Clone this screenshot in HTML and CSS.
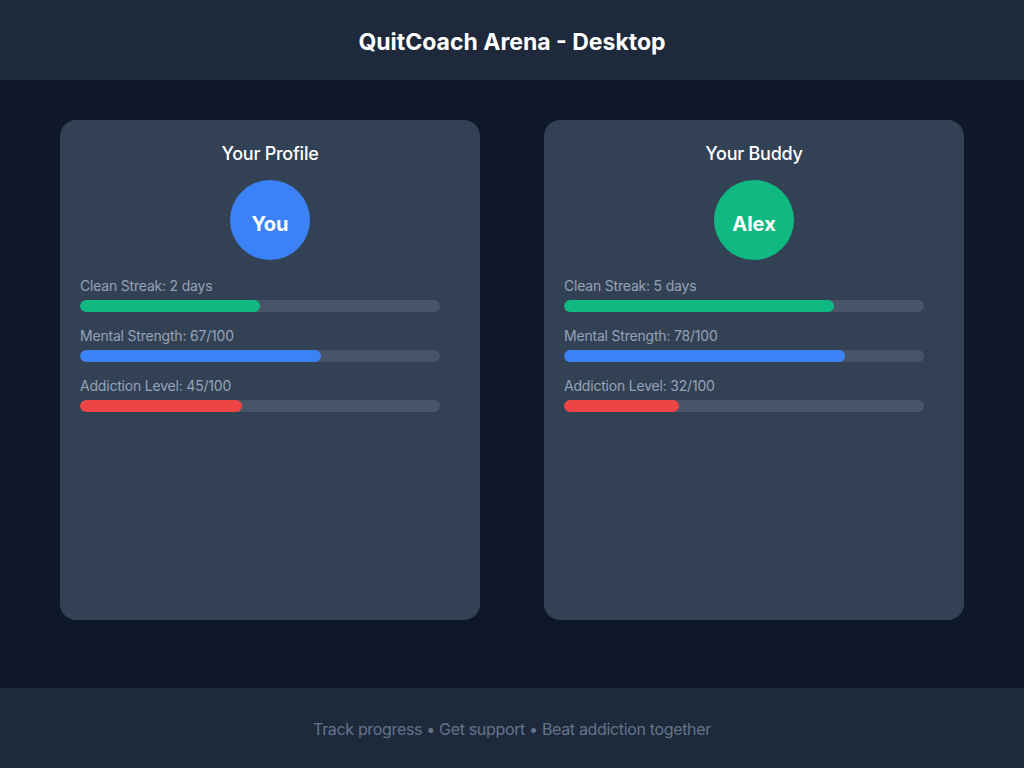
FILE: index.html
```html
<!DOCTYPE html>
<html lang="en">
<head>
<meta charset="utf-8">
<title>QuitCoach Arena - Desktop</title>
<link rel="stylesheet" href="styles.css">
</head>
<body>
<div class="app">
  <header class="header">
    <h1 class="title">QuitCoach Arena - Desktop</h1>
  </header>
  <main class="main">
    <section class="card">
      <h2 class="card-title">Your Profile</h2>
      <div class="avatar avatar-blue">You</div>
      <div class="stat">
        <div class="stat-label">Clean Streak: 2 days</div>
        <div class="track"><div class="fill fill-green" style="width:50%"></div></div>
      </div>
      <div class="stat">
        <div class="stat-label">Mental Strength: 67/100</div>
        <div class="track"><div class="fill fill-blue" style="width:67%"></div></div>
      </div>
      <div class="stat">
        <div class="stat-label">Addiction Level: 45/100</div>
        <div class="track"><div class="fill fill-red" style="width:45%"></div></div>
      </div>
    </section>
    <section class="card">
      <h2 class="card-title">Your Buddy</h2>
      <div class="avatar avatar-green">Alex</div>
      <div class="stat">
        <div class="stat-label">Clean Streak: 5 days</div>
        <div class="track"><div class="fill fill-green" style="width:75%"></div></div>
      </div>
      <div class="stat">
        <div class="stat-label">Mental Strength: 78/100</div>
        <div class="track"><div class="fill fill-blue" style="width:78%"></div></div>
      </div>
      <div class="stat">
        <div class="stat-label">Addiction Level: 32/100</div>
        <div class="track"><div class="fill fill-red" style="width:32%"></div></div>
      </div>
    </section>
  </main>
  <footer class="footer">Track progress • Get support • Beat addiction together</footer>
</div>
</body>
</html>
```

FILE: styles.css
```css
* { box-sizing: border-box; }
html, body { margin: 0; padding: 0; }
body {
  font-family: Inter, "Noto Sans", sans-serif;
  background: #0f172a;
  color: #ffffff;
}
.app {
  display: flex;
  flex-direction: column;
  height: 768px;
}
.header {
  height: 80px;
  background: #1e293b;
  display: flex;
  align-items: center;
  justify-content: center;
  flex-shrink: 0;
}
.title {
  margin: 0;
  font-size: 23px;
  font-weight: 700;
  color: #ffffff;
  padding-top: 4px;
}
.main {
  flex: 1;
  display: flex;
  justify-content: space-between;
  padding: 40px 60px;
}
.card {
  width: 420px;
  height: 500px;
  background: #334155;
  border-radius: 16px;
  padding: 20px;
  display: flex;
  flex-direction: column;
}
.card-title {
  margin: 0;
  font-size: 18px;
  font-weight: 500;
  letter-spacing: -0.25px;
  line-height: 27px;
  text-align: center;
  color: #ffffff;
}
.avatar {
  width: 80px;
  height: 80px;
  border-radius: 50%;
  margin: 13px auto 16px;
  display: flex;
  align-items: center;
  justify-content: center;
  font-size: 20px;
  font-weight: 700;
  color: #ffffff;
  padding-top: 7px;
}
.avatar-blue { background: #3b82f6; }
.avatar-green { background: #10b981; }
.stat {
  width: 360px;
  margin-bottom: 14px;
}
.stat-label {
  font-size: 14px;
  line-height: 20px;
  letter-spacing: -0.2px;
  color: #94a3b8;
  margin-bottom: 4px;
}
.track {
  height: 12px;
  border-radius: 6px;
  background: #475569;
  overflow: hidden;
}
.fill {
  height: 100%;
  border-radius: 6px;
}
.fill-green { background: #10b981; }
.fill-blue { background: #3b82f6; }
.fill-red { background: #ef4444; }
.footer {
  height: 80px;
  background: #1e293b;
  display: flex;
  align-items: center;
  justify-content: center;
  font-size: 16px;
  letter-spacing: -0.34px;
  color: #64748b;
  flex-shrink: 0;
  padding-top: 1px;
}
```
